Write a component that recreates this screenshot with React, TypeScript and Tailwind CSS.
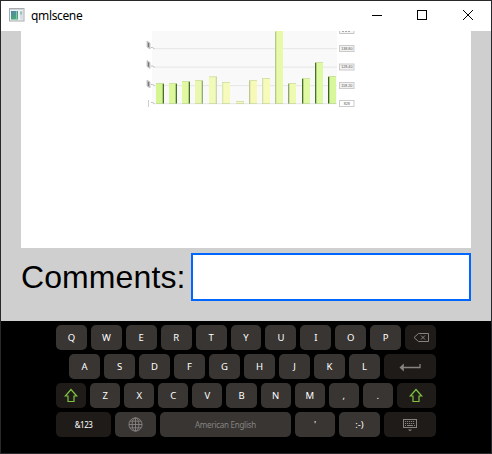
import type { ReactNode } from "react";

const bars = [
  { x: 156, y: 83, fill: "#d4f58f", side: "#47702c", right: true },
  { x: 169, y: 83, fill: "#dcf89b", side: "#47702c", right: true },
  { x: 182, y: 81, fill: "#e1f7a2", side: "#47702c", right: true },
  { x: 195, y: 80, fill: "#e9f8ae", side: "#91ad75", right: true },
  { x: 209, y: 76.5, fill: "#f2fab8", side: "#c8d6b5", right: true },
  { x: 222, y: 82, fill: "#f6fabb", side: "#dbe7b5", right: false },
  { x: 236, y: 101, fill: "#f6f8bd", side: "#e8eebc", right: true },
  { x: 249, y: 80, fill: "#f7f9b8", side: "#bdc993", right: false },
  { x: 262, y: 78, fill: "#f6fbba", side: "#d5dfb6", right: false },
  { x: 275, y: 31, fill: "#e8f9a9", side: "#b2cb8c", right: false },
  { x: 288, y: 83, fill: "#eefab0", side: "#8da378", right: false },
  { x: 302, y: 78, fill: "#e2f9a4", side: "#47702c", right: false },
  { x: 315, y: 62, fill: "#ddf9a1", side: "#47702c", right: false },
  { x: 328, y: 76, fill: "#d8f79a", side: "#37651f", right: false },
];

const gridLines = [48, 66.5, 85, 103];

const valueLabels = [
  { y: 45.5, text: "138.80" },
  { y: 64, text: "128.40" },
  { y: 82.5, text: "118.20" },
  { y: 100.5, text: "828" },
];

function Chart() {
  return (
    <svg className="ml-[119px] block" width="220" height="80" viewBox="140 31 220 80">
      <rect x="152" y="31" width="185" height="73" fill="#f9f9f9" />
      {gridLines.map((y) => (
        <g key={y}>
          <rect x="153" y={y} width="184" height="1.2" fill="#e9e9e9" />
          <path d={`M151 ${y - 0.5}h1.5l2 1.2`} stroke="#b0b0b0" fill="none" strokeWidth=".8" />
        </g>
      ))}
      {[41, 60.5, 80, 100].map((y, i) => (
        <g key={y}>
          <path d={i === 3 ? `M148.5 ${y}v7` : `M147 ${y}l3 2v6l-3-2z`} fill="#aaa" stroke="#c8c8c8" strokeWidth=".9" />
          {i < 3 && <path d={`M148.5 ${y + 2}v4`} stroke="#777" strokeWidth="1" />}
        </g>
      ))}
      {bars.map((b) => (
        <g key={b.x}>
          <rect x={b.x} y={b.y} width="8" height={104 - b.y} fill={b.fill} />
          <rect x={b.right ? b.x + 6.7 : b.x} y={b.y + 0.5} width="1.3" height={103.5 - b.y} fill={b.side} />
          {b.y > 31 && <rect x={b.x} y={b.y} width="8" height=".7" fill="#c9d9a5" />}
          <rect x={b.x} y="103" width="8" height="1" fill="#b9cda0" opacity=".6" />
        </g>
      ))}
      <path d="M339.5 31v2.5H354V31" fill="#f5f5f5" stroke="#c5c5c5" />
      <path d="M342 31.5h9" stroke="#aaa" strokeDasharray="2 1" />
      {valueLabels.map(({ y, text }, i) => (
        <g key={y}>
          <rect x="339.5" y={y} width="14.5" height="6" fill={i === 3 ? "#fff" : "#f2f2f2"} stroke="#cbcbcb" />
          <text x="346.8" y={y + 4.4} textAnchor="middle" fontSize="3.7" fill="#555" className="font-['Liberation_Sans',sans-serif]">
            {text}
          </text>
        </g>
      ))}
    </svg>
  );
}

function Key({ children, width = "flex-1", dark = false }: { children: ReactNode; width?: string; dark?: boolean }) {
  return (
    <div className={`flex h-[25px] items-center justify-center rounded-[5px] ${width} ${dark ? "bg-[#1e1b18]" : "bg-[#383533]"}`}>
      {children}
    </div>
  );
}

function Letters({ text }: { text: string }) {
  return (
    <>
      {text.split("").map((letter) => (
        <Key key={letter}>{letter}</Key>
      ))}
    </>
  );
}

function Shift() {
  return (
    <svg width="14" height="15" viewBox="0 0 14 15" fill="none" stroke="#80c342" strokeWidth="1.2">
      <path d="M7 1.5 1.3 8H4v5.5h6V8h2.7z" />
    </svg>
  );
}

function Keyboard() {
  return (
    <div className="flex h-[132px] flex-col gap-1 bg-black pt-1 pr-[55px] pl-[55px] text-[9.5px] leading-none text-white">
      <div className="flex gap-1">
        <Letters text="QWERTYUIOP" />
        <Key dark>
          <svg width="16" height="11" viewBox="0 0 16 11" fill="none" stroke="#868482">
            <path d="M5.5 1.5h10v8h-10L1 5.5zM8 3.5l4 4m0-4-4 4" />
          </svg>
        </Key>
      </div>
      <div className="flex gap-1 pl-[13px]">
        <Letters text="ASDFGHJKL" />
        <Key dark width="w-[52px]">
          <svg width="22" height="10" viewBox="0 0 22 10">
            <path d="M4 5.5h17V2" fill="none" stroke="#868482" strokeWidth="1.3" />
            <path d="m.5 5.5 4.3-4v8z" fill="#868482" />
          </svg>
        </Key>
      </div>
      <div className="flex gap-1">
        <Key dark><Shift /></Key>
        <Letters text="ZXCVBNM,." />
        <Key dark width="w-[39px]"><Shift /></Key>
      </div>
      <div className="flex gap-1">
        <Key dark width="w-[55px]"><span className="text-[8px] tracking-[-0.5px]">&amp;123</span></Key>
        <Key width="w-[41px]">
          <svg width="15" height="15" viewBox="0 0 15 15" fill="none" stroke="#868482" strokeWidth=".9">
            <circle cx="7.5" cy="7.5" r="6.6" />
            <ellipse cx="7.5" cy="7.5" rx="3.4" ry="6.6" />
            <path d="M7.5 1v13M1 7.5h13M2 4.2h11M2 10.8h11" />
          </svg>
        </Key>
        <Key width="w-[131px]"><span className="text-[8px] tracking-[-0.25px] text-[#868482]">American English</span></Key>
        <Key width="w-[40px]">'</Key>
        <Key width="w-[41px]">:-)</Key>
        <Key dark width="w-[52px]">
          <svg width="14" height="14" viewBox="0 0 14 14" fill="none" stroke="#868482">
            <rect x=".5" y="1.5" width="13" height="8" />
            <path d="M2 3.5h10M2 5.5h10" strokeDasharray="1.2 .8" />
            <path d="M2 7.5h1m1 0h6m1 0h1" />
            <path d="M5 11.5h4l-2 1.7z" fill="#868482" stroke="none" />
          </svg>
        </Key>
      </div>
    </div>
  );
}

export default function App() {
  return (
    <div className="flex h-[454px] w-[492px] flex-col border border-[#29282b] font-['Noto_Sans',sans-serif]">
      <header className="flex h-[30px] items-center bg-white pl-2 text-black">
        <svg width="16" height="14" viewBox="0 0 16 14" className="mb-[2px]">
          <defs>
            <linearGradient id="preview" x2=".6" y2="1">
              <stop stopColor="#5381ad" />
              <stop offset="1" stopColor="#45ac72" />
            </linearGradient>
          </defs>
          <rect x=".5" y=".5" width="14.5" height="12.5" fill="#eef0f1" stroke="#a7acb0" />
          <path d="M1 1.5h14" stroke="#ced3d7" />
          <rect x="2" y="3" width="7" height="8.5" fill="url(#preview)" />
          <path d="M7.5 3v8.5" stroke="#8ac0b3" />
          <rect x="11" y="3" width="3" height="8.5" fill="#d7dfe2" />
          <path d="M12 3.5v3" stroke="#55a78b" />
        </svg>
        <span className="ml-[6px] text-[12px] leading-4 tracking-[-0.35px]">qmlscene</span>
        <div className="ml-auto flex items-center">
          <svg width="102" height="12" viewBox="0 0 102 12" className="mr-[17px] mb-[2px]" fill="none" stroke="#000">
            <path d="M0 6.5h10" />
            <rect x="45.5" y="1.5" width="9" height="9" />
            <path d="m91 1 10 10M101 1 91 11" />
          </svg>
        </div>
      </header>
      <main className="h-[290px] bg-[#cfcfcf] px-5">
        <div className="h-[217px] bg-white"><Chart /></div>
        <div className="flex h-[58px] items-center">
          <label htmlFor="comments" className="w-[170px] font-['Liberation_Sans',sans-serif] text-[32px] leading-none tracking-[0.1px] whitespace-nowrap text-black">Comments:</label>
          <input id="comments" className="h-12 w-[280px] rounded-none border-2 border-[#0066ff] bg-white px-2 outline-none" />
        </div>
      </main>
      <Keyboard />
    </div>
  );
}
